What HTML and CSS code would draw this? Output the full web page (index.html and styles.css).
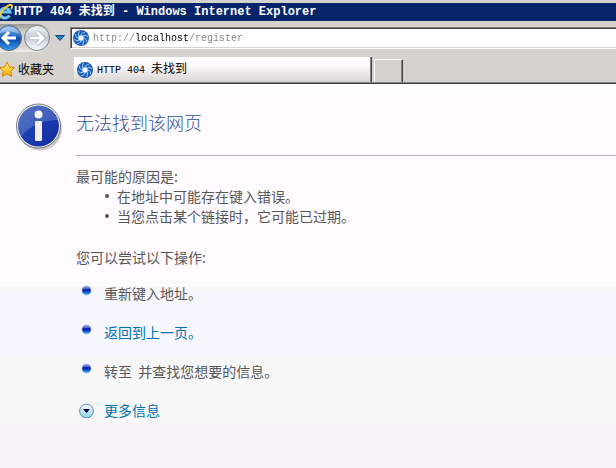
FILE: index.html
```html
<!DOCTYPE html>
<html lang="zh-CN">
<head>
  <meta charset="UTF-8">
  <title>HTTP 404 未找到</title>
  <meta name="viewport" content="width=device-width, initial-scale=1.0">
  <link rel="stylesheet" href="styles.css">
</head>

<body>
  <svg class="defs" aria-hidden="true">
    <defs>
      <linearGradient id="blue" x1="0" y1="0" x2="0" y2="1">
        <stop offset="0" stop-color="#8cb8ec"/>
        <stop offset=".4" stop-color="#2f70cc"/>
        <stop offset=".55" stop-color="#0c4aa8"/>
        <stop offset="1" stop-color="#3ba0ee"/>
      </linearGradient>
      <linearGradient id="silver" x1="0" y1="0" x2="0" y2="1">
        <stop offset="0" stop-color="#f4f6f8"/>
        <stop offset=".5" stop-color="#c3ccd6"/>
        <stop offset="1" stop-color="#f8fbff"/>
      </linearGradient>
      <linearGradient id="gold" x1="0" y1="0" x2="0" y2="1">
        <stop offset="0" stop-color="#fff07a"/>
        <stop offset="1" stop-color="#ffa800"/>
      </linearGradient>
      <linearGradient id="ball" x1="0" y1="0" x2="0" y2="1">
        <stop offset="0" stop-color="#a8a8f0"/>
        <stop offset=".3" stop-color="#5260d0"/>
        <stop offset=".4" stop-color="#0a1cb0"/>
        <stop offset=".6" stop-color="#0838c8"/>
        <stop offset="1" stop-color="#48c8f4"/>
      </linearGradient>
      <linearGradient id="info" x1="0" y1="0" x2="1" y2="1">
        <stop offset="0" stop-color="#2a56b8"/>
        <stop offset=".5" stop-color="#1a3cae"/>
        <stop offset="1" stop-color="#1428a0"/>
      </linearGradient>
      <linearGradient id="more" x1="0" y1="0" x2="0" y2="1">
        <stop offset="0" stop-color="#ffffff"/>
        <stop offset="1" stop-color="#8ed4ee"/>
      </linearGradient>
      <symbol id="globe" viewBox="0 0 16 16">
        <circle cx="8" cy="8" r="8" fill="#1c5fb4"/>
        <g fill="none" stroke="#8cc4f8" stroke-width="1">
          <path id="blade" d="M8 5Q9 2 12 2.500"/>
          <use href="#blade" transform="rotate(45 8 8)"/>
          <use href="#blade" transform="rotate(90 8 8)"/>
          <use href="#blade" transform="rotate(135 8 8)"/>
          <use href="#blade" transform="rotate(180 8 8)"/>
          <use href="#blade" transform="rotate(225 8 8)"/>
          <use href="#blade" transform="rotate(270 8 8)"/>
          <use href="#blade" transform="rotate(315 8 8)"/>
        </g>
        <circle cx="8" cy="8" r="3" fill="#fff" stroke="#6eb4f4"/>
      </symbol>
      <symbol id="bullet" viewBox="0 0 16 16">
        <circle cx="7.500" cy="5.500" r="4.500" fill="url(#ball)" stroke="#8aa0d8" stroke-width=".6"/>
      </symbol>
    </defs>
  </svg>

  <header class="titlebar">
    <svg class="ie" viewBox="3 0 13 18" aria-hidden="true">
      <path d="M12.500 12.500A5 5 0 1 1 13 9H4" fill="none" stroke="#6cc4f8" stroke-width="3"/>
      <path d="M3 16C0 12 10 1 14 2c2 .5 1 3 0 4" fill="none" stroke="#f8c838" stroke-width="2"/>
    </svg>
    <span class="window-title">HTTP 404 未找到 - Windows Internet Explorer</span>
  </header>

  <nav class="toolbar">
    <div class="history">
      <button type="button" class="back" aria-label="后退">
        <svg viewBox="0 0 23 28" width="23" height="28">
          <circle cx="9" cy="14" r="12.500" fill="url(#blue)" stroke="#5c6c84"/>
          <path d="M-2 10A12 12 0 0 1 20 10Q9 5-2 10" fill="#fff" opacity=".35"/>
          <path d="M16 14H5M9 8L3 14l6 6" fill="none" stroke="#fff" stroke-width="3"/>
        </svg>
      </button>
      <button type="button" class="forward" aria-label="前进">
        <svg viewBox="0 0 28 28" width="28" height="28">
          <circle cx="14" cy="14" r="12.500" fill="url(#silver)" stroke="#7c848c"/>
          <path d="M7 14H19M14 8l6 6-6 6" fill="none" stroke="#8c98a8" stroke-width="4"/>
          <path d="M7 14H19M14 8l6 6-6 6" fill="none" stroke="#fff" stroke-width="3"/>
        </svg>
      </button>
    </div>
    <button type="button" class="recent" aria-label="最近的页面">
      <svg viewBox="0 0 10 6" width="10" height="6">
        <path d="M.5.500h9L5 5.500z" fill="#2c80c8" stroke="#0c4480"/>
      </svg>
    </button>
    <label class="address">
      <svg class="site-icon" aria-hidden="true"><use href="#globe"/></svg>
      <input type="text" class="url" value="http://localhost/register" aria-label="地址" spellcheck="false">
    </label>
  </nav>

  <div class="tabs">
    <button type="button" class="favorites">
      <svg viewBox="2 0 15 16" width="15" height="16" aria-hidden="true">
        <path d="M9 1l2.300 4.800 5.200.7-3.800 3.700 1 5.200L9 12.900l-4.700 2.500 1-5.200L1.500 6.500l5.200-.7z" fill="url(#gold)" stroke="#d08400"/>
      </svg>
      <span>收藏夹</span>
    </button>
    <button type="button" class="tab">
      <svg class="site-icon" aria-hidden="true"><use href="#globe"/></svg>
      <span class="tab-title">HTTP 404 <span class="cjk">未找到</span></span>
    </button>
    <button type="button" class="new-tab" aria-label="新选项卡"></button>
  </div>

  <main class="page">
    <svg class="info-icon" viewBox="0 0 47 48" width="47" height="48" aria-hidden="true">
      <ellipse cx="24" cy="26" rx="22" ry="21.500" fill="#888" opacity=".45"/>
      <circle cx="22.500" cy="23" r="22" fill="#f4f4f4" stroke="#777"/>
      <circle cx="22.500" cy="23" r="20.500" fill="url(#info)"/>
      <path d="M2 22A20.500 20.500 0 0 1 42 17Q20 17 5 33Q2 28 2 22" fill="#fff" opacity=".18"/>
      <circle cx="22.500" cy="11.500" r="4" fill="#f4f4f4"/>
      <rect x="19" y="18" width="7" height="20" rx="1" fill="#f0f0f0"/>
    </svg>
    <div class="content">
      <h1>无法找到该网页</h1>
      <p>最可能的原因是:</p>
      <ul class="causes">
        <li>在地址中可能存在键入错误。</li>
        <li>当您点击某个链接时，它可能已过期。</li>
      </ul>
      <p class="try">您可以尝试以下操作:</p>
      <ul class="actions">
        <li><svg aria-hidden="true"><use href="#bullet"/></svg><span>重新键入地址。</span></li>
        <li><svg aria-hidden="true"><use href="#bullet"/></svg><a href="#back">返回到上一页。</a></li>
        <li><svg aria-hidden="true"><use href="#bullet"/></svg><span>转至&nbsp; 并查找您想要的信息。</span></li>
        <li>
          <svg viewBox="0 0 16 16" aria-hidden="true">
            <circle cx="7.500" cy="9" r="6.900" fill="url(#more)" stroke="#5c86c0"/>
            <path d="M4 7h7L7.500 11z" fill="#000050"/>
          </svg>
          <a href="#more-info">更多信息</a>
        </li>
      </ul>
    </div>
  </main>
</body>
</html>
```

FILE: styles.css
```css
* {
  box-sizing: border-box;
}

body {
  margin: 0;
  min-height: 100vh;
  display: flex;
  flex-direction: column;
  background-color: #d6d3ce;
  font-family: "Noto Sans CJK SC", sans-serif;
  font-size: 12px;
  color: #000;
}

button {
  margin: 0;
  padding: 0;
  border: 0;
  background: none;
  font: inherit;
  color: inherit;
}

svg {
  display: block;
  flex: none;
}

.defs {
  position: absolute;
  width: 0;
  height: 0;
}

/* window title */
.titlebar {
  display: flex;
  align-items: center;
  gap: 1px;
  height: 21px;
  border-top: 3px solid #d6d3ce;
  background-color: #08246b;
  color: #fff;
}

.ie {
  width: 13px;
  height: 18px;
}

.window-title {
  font: bold 12px/18px "Liberation Mono", "Noto Sans CJK SC", monospace;
  white-space: nowrap;
}

/* navigation */
.toolbar {
  display: flex;
  align-items: center;
  height: 34px;
}

.history {
  display: flex;
  border-radius: 0 14px 14px 0;
  background: linear-gradient(#9c9a98, #d6d3ce 30%, #d6d3ce 80%, #f0eeea);
}

.recent {
  width: 19px;
  padding-left: 4px;
}

.address {
  flex: 1;
  display: flex;
  align-items: center;
  gap: 4px;
  height: 22px;
  padding-left: 2px;
  background-color: #fff;
  border: solid #848284;
  border-width: 1px 0 1px 1px;
  border-bottom-color: #fff;
  box-shadow: inset 1px 1px #424142, inset 0 -1px #d6d3ce;
}

.site-icon {
  width: 16px;
  height: 16px;
}

/* the host is darker than the rest of the address */
.url {
  flex: 1;
  min-width: 0;
  padding: 1px 0 0;
  border: 0;
  outline: 0;
  font: 10px/16px "Liberation Mono", monospace;
  color: transparent;
  background: linear-gradient(to right, #848284 7ch, #000 7ch 16ch, #848284 16ch);
  background-clip: text;
  -webkit-background-clip: text;
}

/* tabs */
.tabs {
  display: flex;
  align-items: flex-end;
  height: 29px;
  border-bottom: 1px solid #424142;
  box-shadow: inset 0 -1px #848284;
  padding-bottom: 1px;
}

.favorites {
  display: flex;
  align-items: center;
  gap: 3px;
  width: 74px;
  height: 27px;
}

.tab {
  display: flex;
  align-items: center;
  gap: 4px;
  width: 298px;
  height: 25px;
  padding-left: 3px;
  background: linear-gradient(#fff, #fffbff 30%, #d9d5d2);
  border-right: 1px solid #424142;
  box-shadow: inset -1px 0 #848284;
}

.tab-title {
  font: 10px/20px "Liberation Mono", monospace;
}

.cjk {
  font: 12px/20px "Noto Sans CJK SC", sans-serif;
}

.new-tab {
  width: 29px;
  height: 23px;
  margin-left: 2px;
  border: 1px solid #fff;
  border-right-color: #424142;
  border-bottom: 0;
  box-shadow: inset -1px 0 #848284;
}

/* error page */
.page {
  flex: 1;
  display: grid;
  grid-template-columns: 60px 1fr;
  align-items: start;
  padding: 19px 0 20px 16px;
  background: linear-gradient(
    #fff 11px,
    #fffbff 11px 197px,
    #f7fbff 197px 200px,
    #fff 200px 202px,
    #f7f7f7 202px 208px,
    #f7f7ff 208px 272px,
    #f7f7f7 272px 339px,
    #f7f3f7 339px
  );
  font-size: 14px;
  line-height: 20px;
  color: #575757;
}

h1 {
  margin: 0 0 10px;
  padding-bottom: 13px;
  border-bottom: 1px solid #b5b6b5;
  font-size: 18px;
  font-weight: 300;
  line-height: 39px;
  color: #30549a;
}

p {
  margin: 0;
}

ul {
  margin: 0;
  padding: 0;
  list-style: none;
}

.causes {
  padding-left: 29px;
}

.causes li {
  display: flex;
  align-items: center;
  gap: 8px;
}

.causes li::before {
  content: "";
  width: 4px;
  height: 4px;
  border-radius: 50%;
  background-color: #575757;
}

.try {
  margin-top: 21px;
}

.actions {
  margin-top: 6px;
}

.actions li {
  display: flex;
  align-items: center;
  gap: 9px;
  height: 39px;
  padding-left: 3px;
}

.actions svg {
  width: 16px;
  height: 16px;
}

a {
  color: #0072b0;
  text-decoration: none;
}
```
